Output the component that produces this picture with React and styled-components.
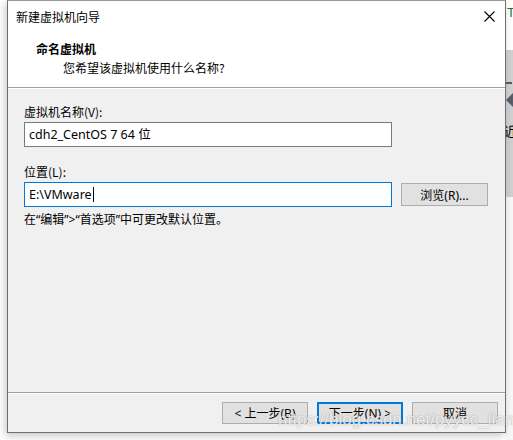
import React from 'react';
import styled, {createGlobalStyle} from 'styled-components';

const Global = createGlobalStyle`
    html, body {
        margin: 0;
        padding: 0;
        background: #fff;
    }
    body {
        font-family: "Noto Sans", "Noto Sans CJK SC", sans-serif;
        font-size: 12px;
        color: #000;
    }
`

const Screen = styled.div`
    display: flex;
    width: 513px;
    height: 440px;
    overflow: hidden;
    padding-left: 7px;
    box-sizing: border-box;
`

const Window = styled.div`
    width: 499px;
    height: 433px;
    box-sizing: border-box;
    border: 1px solid #6f6f6f;
    border-top-color: #9a9a9a;
    background: #f0f0f0;
    display: flex;
    flex-direction: column;
    box-shadow: -2px 3px 8px rgba(0, 0, 0, 0.22);
    position: relative;
    flex-shrink: 0;
`

const TitleBar = styled.div`
    height: 31px;
    background: #fff;
    display: flex;
    align-items: center;
    justify-content: space-between;
    padding: 0 10px 0 8px;
    font-family: "Noto Sans CJK SC", sans-serif;
    line-height: 16px;
`

const Header = styled.div`
    height: 55px;
    background: #fff;
    padding: 9px 0 0 28px;
    box-sizing: border-box;
    font-family: "Noto Sans CJK SC", sans-serif;
    line-height: 16px;
    h4 {
        margin: 0;
        font-size: 12px;
        font-weight: 700;
    }
    p {
        margin: 3px 0 0 27px;
    }
`

const Sep = styled.div`
    height: 1px;
    background: #a0a0a0;
    border-bottom: 1px solid #fff;
`

const Body = styled.div`
    flex: 1;
    padding: 15px 0 0 16px;
    line-height: 16px;
`

const Label = styled.div`
    font-family: "Noto Sans CJK SC", sans-serif;
    margin-top: ${p => p.$top || 0}px;
`

const Row = styled.div`
    display: flex;
    align-items: flex-start;
    margin-top: 2px;
`

const Field = styled.div`
    width: 368px;
    height: 25px;
    box-sizing: border-box;
    border: 1px solid ${p => p.$focused ? '#0078d7' : '#7a7a7a'};
    background: #fff;
    padding-left: 4px;
    display: flex;
    align-items: center;
    font-family: "Noto Sans", "Noto Sans CJK SC", sans-serif;
    font-size: 12.5px;
`

const Caret = styled.span`
    display: inline-block;
    width: 1px;
    height: 15px;
    background: #000;
    margin-left: 1px;
`

const Button = styled.button`
    width: ${p => p.$w || 86}px;
    height: ${p => p.$h || 22}px;
    box-sizing: border-box;
    background: #e1e1e1;
    border: ${p => p.$primary ? '2px solid #0078d7' : '1px solid #adadad'};
    font-family: "Noto Sans", "Noto Sans CJK SC", sans-serif;
    font-size: 12px;
    color: #000;
    padding: 0;
    margin-left: ${p => p.$ml || 0}px;
    margin-top: ${p => p.$mt || 0}px;
    display: flex;
    align-items: center;
    justify-content: center;
`

const Hint = styled.div`
    font-family: "Noto Sans", "Noto Sans CJK SC", sans-serif;
    margin-top: 5px;
`

const Footer = styled.div`
    height: 38px;
    display: flex;
    justify-content: flex-end;
    gap: 9px;
    padding: 8px 7px 0 0;
    box-sizing: border-box;
`

const Watermark = styled.div`
    position: absolute;
    left: 270px;
    top: 409px;
    font-family: "Liberation Sans", sans-serif;
    font-size: 17px;
    color: rgba(255, 255, 255, 0.8);
    text-shadow: 0 0 1px rgba(120, 120, 120, 0.5), 0 0 2px rgba(120, 120, 120, 0.3);
    white-space: nowrap;
    pointer-events: none;
`

const Behind = styled.div`
    flex: 1;
    display: flex;
    flex-direction: column;
    overflow: hidden;
`

const BehindTop = styled.div`
    height: 50px;
    background: #fff;
    color: #1a7a3a;
    font-family: "Liberation Sans", sans-serif;
    font-size: 13px;
    padding: 5px 0 0 1px;
    box-sizing: border-box;
`

const BehindPanel = styled.div`
    height: 147px;
    background: #d0d0d0;
    display: flex;
    flex-direction: column;
    padding-top: 32px;
    box-sizing: border-box;
    font-family: "Noto Sans CJK SC", sans-serif;
    font-size: 13px;
    span {
        display: block;
        width: 6px;
        height: 2px;
        background: #55606a;
    }
    b {
        display: block;
        width: 0;
        height: 0;
        border-top: 7px solid transparent;
        border-bottom: 7px solid transparent;
        border-right: 7px solid #55606a;
        margin-top: 9px;
    }
    i {
        font-style: normal;
        margin-top: 14px;
        margin-left: -2px;
    }
`

const BehindRest = styled.div`
    flex: 1;
    background: #f7f7f7;
`

const CloseIcon = () => (
    <svg width="11" height="11" viewBox="0 0 11 11">
        <path d="M0.5 0.5 L10.5 10.5 M10.5 0.5 L0.5 10.5" stroke="#000" strokeWidth="1.1" fill="none"/>
    </svg>
)

export default function App() {
    return (
        <>
            <Global/>
            <Screen>
                <Window>
                    <TitleBar>
                        <span>新建虚拟机向导</span>
                        <CloseIcon/>
                    </TitleBar>
                    <Header>
                        <h4>命名虚拟机</h4>
                        <p>您希望该虚拟机使用什么名称?</p>
                    </Header>
                    <Sep/>
                    <Body>
                        <Label>虚拟机名称(V):</Label>
                        <Row>
                            <Field>cdh2_CentOS 7 64 位</Field>
                        </Row>
                        <Label $top={17}>位置(L):</Label>
                        <Row>
                            <Field $focused>E:\VMware<Caret/></Field>
                            <Button $w={87} $h={23} $ml={9} $mt={1}>浏览(R)...</Button>
                        </Row>
                        <Hint>在“编辑”&gt;“首选项”中可更改默认位置。</Hint>
                    </Body>
                    <Sep/>
                    <Footer>
                        <Button>&lt; 上一步(B)</Button>
                        <Button $primary>下一步(N) &gt;</Button>
                        <Button>取消</Button>
                    </Footer>
                    <Watermark>https://blog.csdn.net/pyycc_liang</Watermark>
                </Window>
                <Behind>
                    <BehindTop>T</BehindTop>
                    <BehindPanel>
                        <span/>
                        <b/>
                        <i>近</i>
                    </BehindPanel>
                    <BehindRest/>
                </Behind>
            </Screen>
        </>
    );
}
